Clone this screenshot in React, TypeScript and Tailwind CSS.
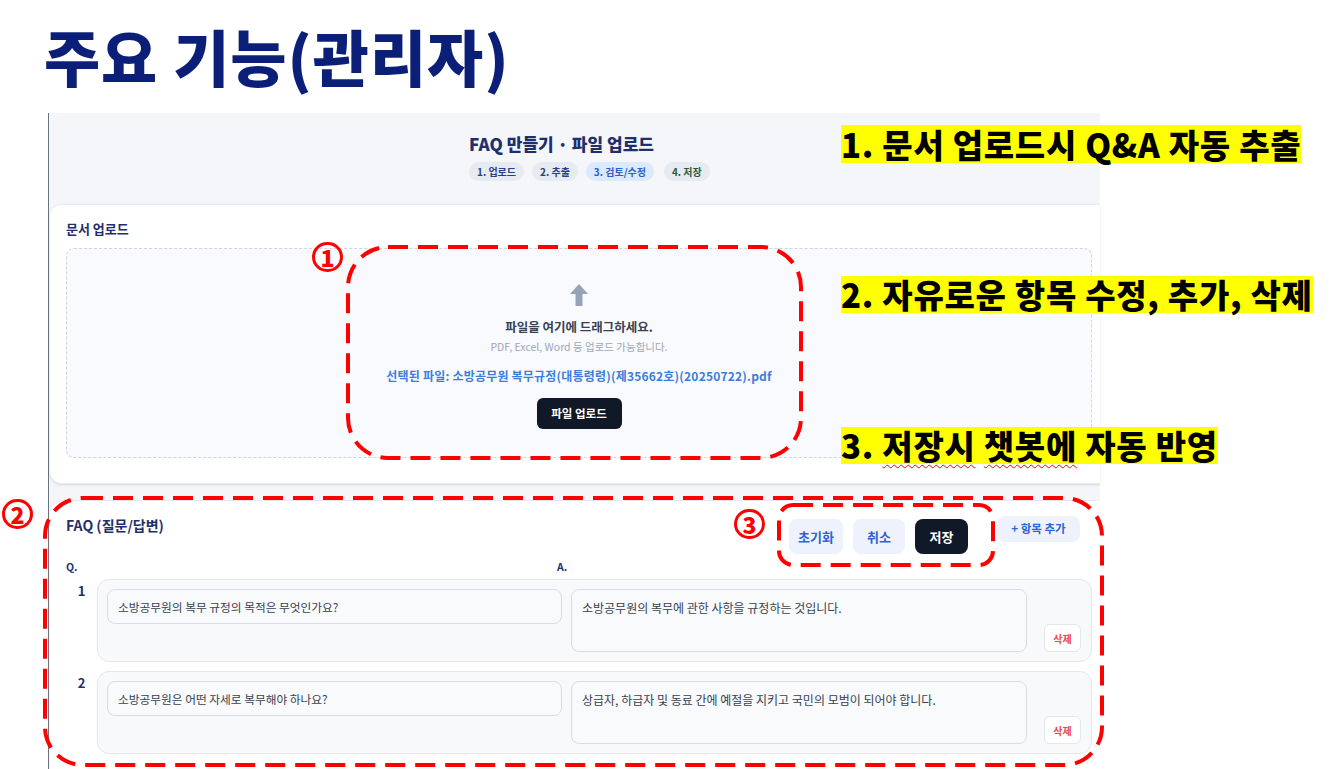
import React from "react";

const KR = { fontFamily: '"Noto Sans CJK KR", "Noto Sans", sans-serif' };

function DashedBox({ x, y, w, h, r }: { x: number; y: number; w: number; h: number; r: number }) {
  return (
    <svg
      className="absolute pointer-events-none"
      style={{ left: x - 3, top: y - 3 }}
      width={w + 6}
      height={h + 6}
    >
      <rect
        x={3}
        y={3}
        width={w}
        height={h}
        rx={r}
        ry={r}
        fill="none"
        stroke="#ff0000"
        strokeWidth={4}
        strokeDasharray="20 10"
      />
    </svg>
  );
}

function Circled({ n, x, y }: { n: string; x: number; y: number }) {
  return (
    <div
      className="absolute w-[31px] h-[30px] rounded-full border-[3px] border-[#ff0000] flex items-center justify-center text-[#ff0000] text-[23px] font-black leading-none"
      style={{ left: x - 15, top: y - 15 }}
    >
      {n}
    </div>
  );
}

function Row({ n, q, a }: { n: string; q: string; a: string }) {
  return (
    <div className="flex">
      <div className="w-[31px] pt-[2px] text-center text-[13px] font-bold text-[#1e2f6b]">{n}</div>
      <div className="flex-1 h-[83px] rounded-xl border border-[#e5e7eb] bg-[#f8f9fb] p-[9px] flex gap-[9px]">
        <div className="w-[455px] h-[35px] rounded-lg border border-[#d9dce3] bg-[#f9fafb] px-[10px] flex items-center text-[11.7px] text-[#374151]">
          {q}
        </div>
        <div className="w-[456px] h-[63px] rounded-lg border border-[#d9dce3] bg-[#f9fafb] px-[10px] pt-[9px] text-[12px] text-[#374151]">
          {a}
        </div>
        <div className="flex-1 flex items-end justify-end pr-[1px]">
          <div className="w-[37px] h-[28px] rounded-md border border-[#e5e7eb] bg-white flex items-center justify-center text-[10px] font-bold text-[#ef4444]">
            삭제
          </div>
        </div>
      </div>
    </div>
  );
}

const hl = "absolute left-[841px] bg-[#ffff00] text-[33px] font-black text-black tracking-[0.7px] whitespace-nowrap";

export default function App() {
  return (
    <div className="relative w-[1337px] h-[769px] bg-white overflow-hidden" style={KR}>
      <div className="h-[113px] pl-[44px] pt-[18px]">
        <h1 className="text-[61px] leading-[76px] font-black text-[#0b1f78] tracking-[1px]">주요 기능(관리자)</h1>
      </div>

      <div className="ml-[48px] w-[1052px] h-[656px] border-l border-[#6b7280] bg-[#f5f6fa] flex flex-col">
        {/* header */}
        <div className="h-[91px] flex flex-col items-start pl-[420px] pt-[19px]">
          <div className="text-[17px] leading-[24px] font-extrabold text-[#1e2f6b]">FAQ 만들기 · 파일 업로드</div>
          <div className="mt-[6px] flex gap-[8px] text-[10px] font-bold">
            <span className="h-[19px] px-[8px] rounded-full bg-[#e6eaf1] text-[#2a3f86] flex items-center">1. 업로드</span>
            <span className="h-[19px] px-[8px] rounded-full bg-[#e6eaf1] text-[#2a3f86] flex items-center">2. 추출</span>
            <span className="h-[19px] px-[8px] rounded-full bg-[#dbeafe] text-[#2b5fc8] flex items-center">3. 검토/수정</span>
            <span className="h-[19px] px-[8px] rounded-full bg-[#e6eaf1] text-[#2f5a3a] flex items-center ml-[2px]">4. 저장</span>
          </div>
        </div>

        {/* upload card */}
        <div className="h-[280px] ml-[1px] bg-white rounded-tl-xl rounded-bl-xl border-t border-b border-[#e8eaef] shadow-sm pl-[16px] pr-[8px] pt-[14px]">
          <div className="text-[13px] leading-[20px] font-bold text-[#1e2f6b]">문서 업로드</div>
          <div className="mt-[9px] h-[210px] rounded-lg border border-dashed border-[#cfd5de] bg-[#f9fafd] flex flex-col items-center pt-[34px]">
            <svg width="20" height="24" viewBox="0 0 20 24">
              <path d="M10 1 L19 11 H13.5 V23 H6.5 V11 H1 Z" fill="#94a3b8" />
            </svg>
            <div className="mt-[11px] text-[12.5px] leading-[17px] font-bold text-[#374151]">파일을 여기에 드래그하세요.</div>
            <div className="mt-[5px] text-[10.5px] leading-[14px] text-[#a0a7b4]">PDF, Excel, Word 등 업로드 가능합니다.</div>
            <div className="mt-[14px] text-[12px] leading-[16px] font-bold text-[#3b7ddd] tracking-[0.2px]">
              선택된 파일: 소방공무원 복무규정(대통령령)(제35662호)(20250722).pdf
            </div>
            <div className="mt-[14px] w-[85px] h-[31px] rounded-md bg-[#111827] text-white text-[11.5px] font-bold flex items-center justify-center">
              파일 업로드
            </div>
          </div>
        </div>

        {/* FAQ card */}
        <div className="mt-[16px] flex-1 ml-[1px] bg-white rounded-tl-xl border-t border-[#e8eaef] pl-[16px] pr-[8px] pt-[13px]">
          <div className="flex items-start h-[45px]">
            <div className="w-[723px] pt-[1px] text-[14px] leading-[20px] font-bold text-[#1e2f6b]">FAQ (질문/답변)</div>
            <div className="flex gap-[10px] pt-[5px]">
              <div className="w-[54px] h-[35px] rounded-lg bg-[#eef2fd] text-[#2e63d6] text-[13px] font-bold flex items-center justify-center">초기화</div>
              <div className="w-[52px] h-[35px] rounded-lg bg-[#eef2fd] text-[#2e63d6] text-[13px] font-bold flex items-center justify-center">취소</div>
              <div className="w-[53px] h-[35px] rounded-lg bg-[#111827] text-white text-[13px] font-bold flex items-center justify-center">저장</div>
            </div>
            <div className="ml-[29px] pt-[2px]">
              <div className="w-[83px] h-[26px] rounded-lg bg-[#eef2fd] text-[#2e63d6] text-[11.5px] font-bold flex items-center justify-center">+ 항목 추가</div>
            </div>
          </div>
          <div className="flex h-[20px] text-[10.5px] font-bold text-[#1e2f6b]">
            <div className="w-[491px]">Q.</div>
            <div>A.</div>
          </div>
          <div className="flex flex-col gap-[9px]">
            <Row n="1" q="소방공무원의 복무 규정의 목적은 무엇인가요?" a="소방공무원의 복무에 관한 사항을 규정하는 것입니다." />
            <Row n="2" q="소방공무원은 어떤 자세로 복무해야 하나요?" a="상급자, 하급자 및 동료 간에 예절을 지키고 국민의 모범이 되어야 합니다." />
          </div>
        </div>
      </div>

      {/* annotations */}
      <DashedBox x={348} y={247} w={453} h={211} r={40} />
      <DashedBox x={45} y={498} w={1057} h={267} r={38} />
      <DashedBox x={779} y={505} w={214} h={60} r={14} />
      <Circled n="1" x={327} y={257} />
      <Circled n="2" x={17} y={514} />
      <Circled n="3" x={749} y={524} />

      <div className={`${hl} top-[125px] h-[38px] leading-[38px]`}>1. 문서 업로드시 Q&amp;A 자동 추출</div>
      <div className={`${hl} top-[276px] h-[37px] leading-[37px]`}>2. 자유로운 항목 수정, 추가, 삭제</div>
      <div className={`${hl} top-[427px] h-[37px] leading-[37px]`}>
        3.{" "}
        <span className="underline decoration-wavy decoration-[#ff0000] decoration-1 underline-offset-[5px]">저장시</span>{" "}
        <span className="underline decoration-wavy decoration-[#ff0000] decoration-1 underline-offset-[5px]">챗봇에</span> 자동 반영
      </div>
    </div>
  );
}
